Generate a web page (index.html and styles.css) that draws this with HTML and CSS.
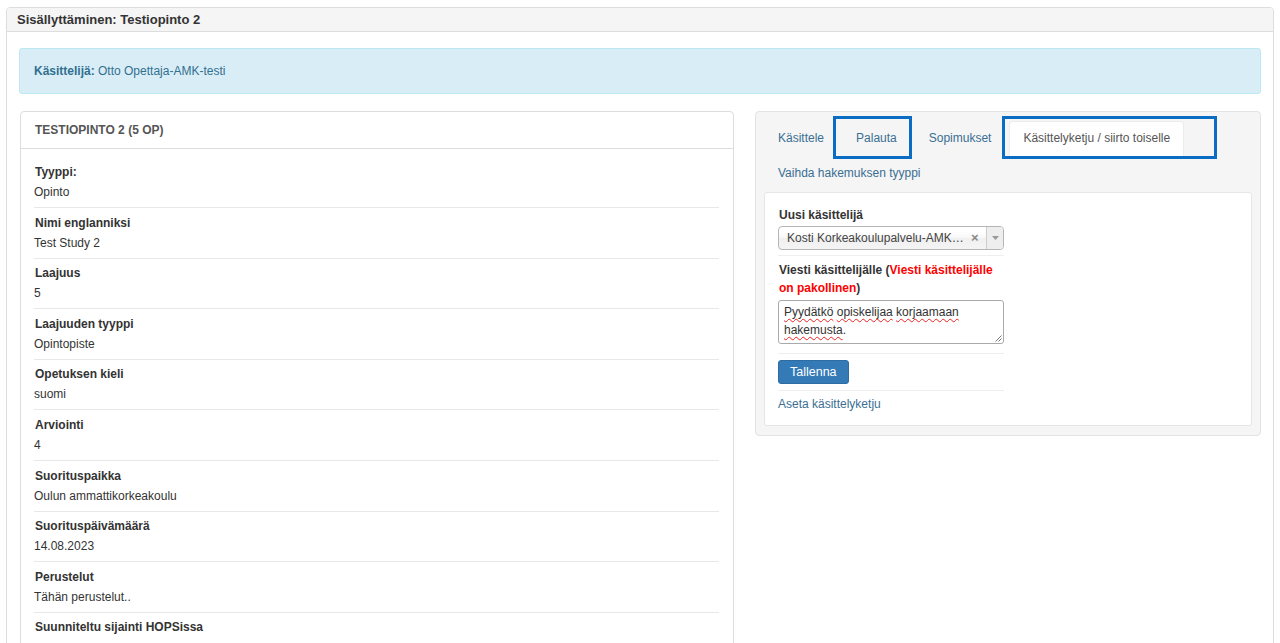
FILE: index.html
```html
<!DOCTYPE html>
<html lang="fi">
<head>
<meta charset="utf-8">
<title>Sisällyttäminen: Testiopinto 2</title>
<link rel="stylesheet" href="styles.css">
</head>
<body>
<div class="page">
  <div class="panel main">
    <div class="panel-heading">Sisällyttäminen: Testiopinto 2</div>
    <div class="panel-body">
      <div class="alert"><strong>Käsittelijä:</strong> Otto Opettaja-AMK-testi</div>
      <div class="columns">
        <div class="info">
          <div class="info-heading">TESTIOPINTO 2 (5 OP)</div>
          <div class="info-body">
            <div class="item"><div class="label">Tyyppi:</div><div class="value">Opinto</div></div>
            <div class="item"><div class="label">Nimi englanniksi</div><div class="value">Test Study 2</div></div>
            <div class="item"><div class="label">Laajuus</div><div class="value">5</div></div>
            <div class="item"><div class="label">Laajuuden tyyppi</div><div class="value">Opintopiste</div></div>
            <div class="item"><div class="label">Opetuksen kieli</div><div class="value">suomi</div></div>
            <div class="item"><div class="label">Arviointi</div><div class="value">4</div></div>
            <div class="item"><div class="label">Suorituspaikka</div><div class="value">Oulun ammattikorkeakoulu</div></div>
            <div class="item"><div class="label">Suorituspäivämäärä</div><div class="value">14.08.2023</div></div>
            <div class="item"><div class="label">Perustelut</div><div class="value">Tähän perustelut..</div></div>
            <div class="item"><div class="label">Suunniteltu sijainti HOPSissa</div><div class="value">&nbsp;</div></div>
          </div>
        </div>
        <div class="well">
          <ul class="tabs">
            <li class="tab"><a>Käsittele</a></li>
            <li class="tab"><a>Palauta</a></li>
            <li class="tab"><a>Sopimukset</a></li>
            <li class="tab active"><a>Käsittelyketju / siirto toiselle</a></li>
            <li class="tab-break"></li>
            <li class="tab"><a>Vaihda hakemuksen tyyppi</a></li>
          </ul>
          <div class="mark mark-palauta"></div>
          <div class="mark mark-active"></div>
          <div class="tab-content">
            <div class="form">
              <div class="form-label">Uusi käsittelijä</div>
              <div class="select">
                <span class="select-text">Kosti Korkeakoulupalvelu-AMK…</span>
                <span class="select-clear">×</span>
                <span class="select-arrow"><svg width="7" height="4" viewBox="0 0 7 4"><path d="M0 0 L7 0 L3.5 4 Z" fill="#999"/></svg></span>
              </div>
              <div class="sep sep-a"></div>
              <div class="form-label wrap">Viesti käsittelijälle (<span class="req">Viesti käsittelijälle on pakollinen</span>)</div>
              <div class="textarea">
                <span class="sp">Pyydätkö</span> <span class="sp">opiskelijaa</span> <span class="sp">korjaamaan</span> <span class="sp">hakemusta</span>.
                <svg class="grip" width="8" height="8" viewBox="0 0 8 8"><path d="M7.5 1.5 L1.5 7.5 M7.5 4.5 L4.5 7.5" stroke="#777" stroke-width="1"/></svg>
              </div>
              <div class="sep sep-b"></div>
              <button class="btn" type="button">Tallenna</button>
              <div class="sep sep-c"></div>
              <a class="link">Aseta käsittelyketju</a>
            </div>
          </div>
        </div>
      </div>
    </div>
  </div>
</div>
</body>
</html>
```

FILE: styles.css
```css
* { box-sizing: border-box; }
html, body { margin: 0; padding: 0; background: #fff; }
body {
  font-family: "Liberation Sans", Arial, sans-serif;
  font-size: 12px;
  color: #333;
  overflow: hidden;
}
.page { padding: 7px 6px 0 6px; }
.panel.main {
  border: 1px solid #ddd;
  border-radius: 4px 4px 0 0;
  min-height: 700px;
}
.panel-heading {
  background: #f5f5f5;
  border-bottom: 1px solid #ddd;
  padding: 4px 10px 3px;
  font-size: 13px;
  line-height: 16px;
  font-weight: bold;
  color: #333;
  border-radius: 3px 3px 0 0;
}
.panel-body { padding: 16px 12px; }
.alert {
  background: #d9edf7;
  border: 1px solid #bce8f1;
  border-radius: 3px;
  color: #31708f;
  padding: 14px;
  line-height: 16px;
}
.columns {
  display: grid;
  grid-template-columns: 714px 506px;
  column-gap: 21px;
  align-items: start;
  margin-top: 17px;
  padding-left: 1px;
}
.info {
  border: 1px solid #ddd;
  border-radius: 4px;
  background: #fff;
}
.info-heading {
  padding: 10px 14px;
  line-height: 16px;
  font-weight: bold;
  color: #555;
  border-bottom: 1px solid #ddd;
}
.info-body { padding: 8.5px 14px 0 13px; }
.item {
  padding: 6.5px 0 6.1px;
  border-bottom: 1px solid #e8e8e8;
}
.item:last-child { border-bottom: none; }
.label { font-weight: bold; line-height: 17px; padding-left: 1px; color: #333; }
.value { line-height: 17px; margin-top: 3px; color: #333; }

.well {
  position: relative;
  background: #f5f5f5;
  border: 1px solid #e3e3e3;
  border-radius: 4px;
  padding: 9px 8px 9px;
}
.tabs {
  list-style: none;
  margin: 0;
  padding: 0;
  display: flex;
  flex-wrap: wrap;
}
.tab { margin-right: 4px; }
.tab a {
  display: block;
  padding: 8px 13px;
  border: 1px solid transparent;
  border-radius: 4px 4px 0 0;
  line-height: 17px;
  color: #3a6f93;
}
.tab.active a {
  background: #fff;
  border-color: #ececec #ececec transparent;
  color: #555;
}
.tab-break { flex-basis: 100%; height: 0; }
.mark {
  position: absolute;
  top: 4px;
  height: 43px;
  border: 3px solid #0a6cc2;
}
.mark-palauta { left: 77px; width: 79px; }
.mark-active { left: 246px; width: 215px; }

.tab-content {
  margin-top: 1px;
  background: #fff;
  border: 1px solid #e6e6e6;
  border-radius: 3px;
  padding: 14px 14px 12px 13px;
}
.form { width: 226px; }
.form-label { font-weight: bold; line-height: 17px; padding-left: 1px; margin-bottom: 2px; }
.form-label.wrap { line-height: 18px; margin-bottom: 3px; }
.req { color: #f00; }
.select {
  display: flex;
  align-items: center;
  height: 24px;
  border: 1px solid #b5b5b5;
  border-radius: 4px;
  background: linear-gradient(#fff 20%, #f7f7f7 50%, #f0f0f0 52%, #f4f4f4 100%);
}
.select-text {
  flex: 1;
  min-width: 0;
  padding-left: 8px;
  white-space: nowrap;
  line-height: 22px;
  color: #444;
}
.select-clear {
  width: 10px;
  margin: 0 5px 0 5px;
  font-weight: bold;
  font-size: 13px;
  color: #888;
  line-height: 22px;
}
.select-arrow {
  width: 17px;
  height: 22px;
  border-left: 1px solid #ccc;
  background: #eee;
  border-radius: 0 3px 3px 0;
  display: flex;
  align-items: center;
  justify-content: center;
}
.sep { border-top: 1px solid #eee; }
.sep-a { margin: 5px 0 5px; }
.sep-b { margin: 9px 0 6px; }
.sep-c { margin: 6px 0 5px; }
.textarea {
  position: relative;
  height: 44px;
  border: 1px solid #aaa;
  border-radius: 3px;
  padding: 2px 5px;
  line-height: 18px;
  color: #333;
  margin-top: 3px;
  background: #fff;
}
.sp {
  text-decoration: underline wavy #e22;
  text-decoration-thickness: 1px;
  text-underline-offset: 2px;
  text-decoration-skip-ink: none;
}
.grip { position: absolute; right: 1px; bottom: 1px; }
.btn {
  display: block;
  height: 24px;
  padding: 0 11px;
  background: #337ab7;
  border: 1px solid #2e6da4;
  border-radius: 3px;
  color: #fff;
  font-family: "Liberation Sans", Arial, sans-serif;
  font-size: 12.5px;
  line-height: 22px;
}
.link {
  display: block;
  line-height: 17px;
  color: #3a6f93;
}
```
